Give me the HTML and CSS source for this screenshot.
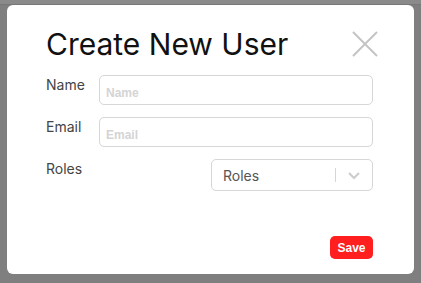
FILE: index.html
```html
<!DOCTYPE html>
<html lang="en">
<head>
  <meta charset="UTF-8">
  <title>Create New User</title>
  <link rel="stylesheet" href="styles.css">
</head>
<body>

<div class="topbar"></div>

<div class="modal">
  <div class="modal-head">
    <h1>Create New User</h1>
    <button class="close-btn" aria-label="Close">
      <svg width="26" height="26" viewBox="0 0 26 26">
        <path d="M1 1 L25 25 M25 1 L1 25" stroke="#c4c4c4" stroke-width="2" fill="none"/>
      </svg>
    </button>
  </div>

  <form class="user-form" onsubmit="return false;">
    <label for="name">Name</label>
    <input type="text" id="name" placeholder="Name">

    <label for="email">Email</label>
    <input type="text" id="email" placeholder="Email">

    <label>Roles</label>
    <div class="select">
      <span class="select-value">Roles</span>
      <span class="select-sep"></span>
      <svg class="chevron" width="14" height="10" viewBox="0 0 14 10">
        <path d="M2 3 L7 8 L12 3" stroke="#cccccc" stroke-width="2" fill="none"/>
      </svg>
    </div>
  </form>

  <div class="modal-foot">
    <button class="save-btn">Save</button>
  </div>
</div>

</body>
</html>
```

FILE: styles.css
```css
* { box-sizing: border-box; }
body {
  margin: 0;
  height: 283px;
  overflow: hidden;
  background: #7f7f7f;
  font-family: Inter, 'Noto Sans', sans-serif;
}
.topbar {
  height: 5px;
  background: #8a8a8a;
  border-bottom: 1px solid #777;
}
.modal {
  margin: 0 7px;
  height: 269px;
  background: #fff;
  border-radius: 6px;
  padding: 19px 41px 0 39px;
  display: flex;
  flex-direction: column;
}
.modal-head {
  display: flex;
  justify-content: space-between;
  align-items: center;
  height: 40px;
}
h1 {
  margin: 0;
  font-size: 30px;
  font-weight: 400;
  color: #111;
}
.close-btn {
  background: none;
  border: none;
  padding: 0;
  margin-right: -5px;
  display: flex;
}
.user-form {
  margin-top: 11px;
  display: grid;
  grid-template-columns: 53px 1fr;
  row-gap: 12px;
  align-items: start;
}
.user-form label {
  font-size: 14px;
  color: #444;
  padding-top: 1px;
}
.user-form input {
  height: 30px;
  border: 1px solid #d6d6d6;
  border-radius: 5px;
  padding: 5px 6px 0;
  font-family: 'Liberation Sans', Arial, sans-serif;
  font-size: 12px;
  font-weight: 700;
}
.user-form input::placeholder {
  color: #d4d4d4;
}
.select {
  justify-self: end;
  width: 162px;
  height: 32px;
  border: 1px solid #d6d6d6;
  border-radius: 5px;
  display: flex;
  align-items: center;
  padding: 0 0 0 11px;
}
.select-value {
  flex: 1;
  font-size: 14px;
  color: #555;
}
.select-sep {
  width: 1px;
  height: 14px;
  background: #d6d6d6;
}
.chevron {
  margin: 0 11px;
}
.modal-foot {
  margin-top: auto;
  margin-bottom: 15px;
  display: flex;
  justify-content: flex-end;
}
.save-btn {
  background: #ff1f1f;
  color: #fff;
  border: none;
  border-radius: 5px;
  height: 23px;
  width: 43px;
  padding: 0;
  font-family: 'Liberation Sans', Arial, sans-serif;
  font-weight: 700;
  font-size: 12px;
}
```
